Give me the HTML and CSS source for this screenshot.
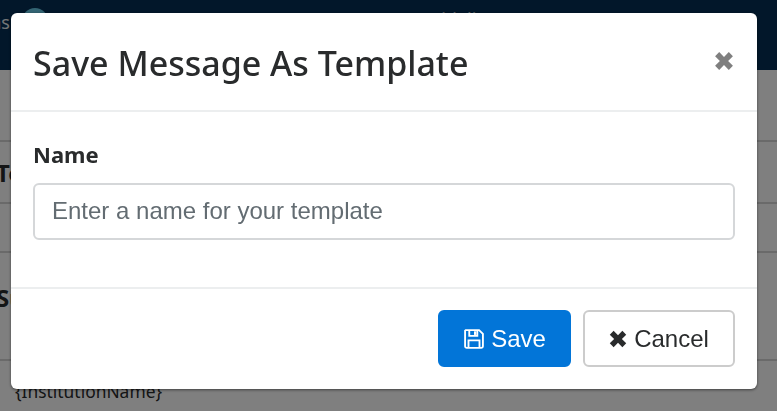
FILE: index.html
```html
<!DOCTYPE html>
<html lang="en">
<head>
<meta charset="utf-8">
<title>Save Message As Template</title>
<link rel="stylesheet" href="styles.css">
</head>
<body>
<div class="page">
  <nav class="navbar">
    <span class="brand-tail">ns</span>
    <span class="logo"></span>
    <span class="nav-links">
      <span>Messages</span><span>Reports</span><span>Reports</span><span>Guidelines</span>
    </span>
  </nav>
  <main class="content">
    <div class="row row-first"></div>
    <div class="row row-to">To</div>
    <div class="row row-mid"></div>
    <div class="row row-subject">Su</div>
    <div class="row-token">{InstitutionName}</div>
  </main>
</div>
<div class="backdrop"></div>
<section class="modal">
  <header class="modal-header">
    <h1 class="modal-title">Save Message As Template</h1>
    <svg class="close" viewBox="0 0 14 14" aria-label="Close"><path d="M1.8 4.2 4.2 1.8 7 4.6 9.8 1.8 12.2 4.2 9.4 7 12.2 9.8 9.8 12.2 7 9.4 4.2 12.2 1.8 9.8 4.6 7Z"/></svg>
  </header>
  <div class="modal-body">
    <label class="field-label" for="name">Name</label>
    <input class="field-input" id="name" type="text" placeholder="Enter a name for your template">
  </div>
  <footer class="modal-footer">
    <button class="btn btn-primary" type="button">
      <svg class="icon" viewBox="0 0 20 20"><path fill="none" stroke="currentColor" stroke-width="1.7" d="M2.5 1.9H14.6L18.1 5.4V16.6A1.5 1.5 0 0 1 16.6 18.1H3.4A1.5 1.5 0 0 1 1.9 16.6V2.5ZM5.7 2.2V7.2H13V2.2M5 18V11.2H15V18"/><path fill="currentColor" d="M10 3H12V6.3H10Z"/></svg>
      Save
    </button>
    <button class="btn btn-light" type="button">
      <svg class="icon" viewBox="0 0 14 14"><path fill="currentColor" d="M.6 3.6 3.6.6 7 4 10.4.6 13.4 3.6 10 7 13.4 10.4 10.4 13.4 7 10 3.6 13.4.6 10.4 4 7Z"/></svg>
      Cancel
    </button>
  </footer>
</section>
</body>
</html>
```
FILE: styles.css
```css
* { box-sizing: border-box; }
html, body { margin: 0; height: 100%; overflow: hidden; }
body { font-family: "Liberation Sans", Arial, sans-serif; color: #292b2c; background: #fff; }
.page { height: 411px; display: flex; flex-direction: column; }
.navbar { height: 70px; flex: none; background: #042e54; display: flex; align-items: flex-start; padding-top: 8px; font-size: 18px; }
.brand-tail { width: 22px; display: flex; justify-content: flex-end; padding-right: 12px; line-height: 22px; margin-top: 3px; color: #e8ecef; font-family: "Noto Sans", sans-serif; }
.logo { width: 26px; height: 26px; flex: none; border-radius: 50%; background: #66c8e6; }
.nav-links { display: grid; grid-template-columns: 129px 104px 107px auto; margin-left: 29px; color: #c4c8cc; font: 400 18px/22px "Noto Sans", sans-serif; }
.content { flex: 1; font-weight: 700; font-family: "Noto Sans", sans-serif; overflow: hidden; }
.row { border-bottom: 2px solid #d4d4d4; overflow: hidden; white-space: nowrap; }
.row-first { height: 72px; }
.row-to { height: 62px; font-size: 24px; line-height: 62px; margin-left: -4px; }
.row-mid { height: 49px; }
.row-subject { height: 108px; font-size: 24px; line-height: 90px; margin-left: -4px; }
.row-token { font: 400 17.4px/24px "Noto Sans", sans-serif; padding: 18px 0 0 15px; }
.backdrop { position: fixed; inset: 0; background: rgba(0,0,0,.5); }
.modal { position: fixed; left: 11px; top: 13px; width: 746px; height: 376px; background: #fff; border-radius: 6px; box-shadow: 0 1px 3px rgba(0,0,0,.5); display: flex; flex-direction: column; }
.modal-header { height: 99px; flex: none; display: flex; align-items: center; justify-content: space-between; padding: 0 22px; border-bottom: 2px solid #eceeef; }
.modal-title { margin: 3px 0 0; font: 500 34px/1 "Noto Sans", sans-serif; color: #292b2c; }
.close { width: 24px; height: 24px; fill: #7f7f7f; margin-top: -2px; margin-right: -1px; }
.modal-body { flex: 1; padding: 28px 22px 0; }
.field-label { display: block; font: 700 22px/28px "Noto Sans", sans-serif; margin-bottom: 15px; color: #292b2c; }
.field-input { display: block; width: 100%; height: 57px; padding: 0 17px 2px; font: 400 24px "Liberation Sans", sans-serif; border: 2px solid #d5d7d9; border-radius: 6px; background: #fff; }
.field-input::placeholder { color: #636c72; opacity: 1; }
.modal-footer { height: 102px; flex: none; border-top: 2px solid #eceeef; display: flex; justify-content: flex-end; align-items: flex-start; gap: 12px; padding: 21px 22px 0; }
.btn { height: 57px; display: inline-flex; align-items: center; justify-content: center; gap: 6px; font: 400 24px "Liberation Sans", sans-serif; border-radius: 6px; padding: 0; }
.btn-primary { width: 133px; background: #0275d8; border: 2px solid #0275d8; color: #fff; }
.btn-light { width: 152px; background: #fff; border: 2px solid #ccc; color: #292b2c; }
.icon { width: 22px; height: 22px; flex: none; }
.btn-light .icon { width: 18px; height: 18px; margin-right: 1px; }
```
